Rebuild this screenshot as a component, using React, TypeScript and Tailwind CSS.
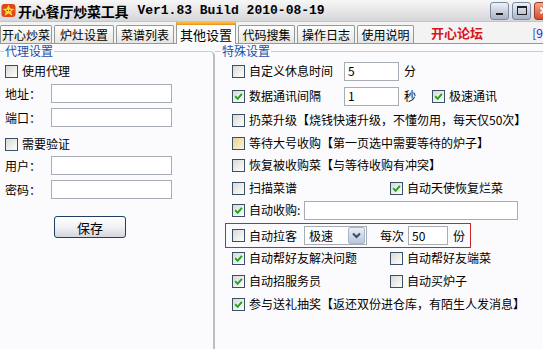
import React from "react";

const Check = ({ checked = false, hot = false }: { checked?: boolean; hot?: boolean }) => (
  <span
    className={`w-[13px] h-[13px] shrink-0 border border-[#3b4f66] flex items-center justify-center ${
      hot ? "bg-linear-to-br from-[#eccf8a] to-[#fdf4de]" : "bg-linear-to-br from-[#d9d9d3] to-white"
    }`}
  >
    {checked && (
      <svg width="9" height="9" viewBox="0 0 9 9">
        <path d="M1.2 4.2 L3.6 6.8 L7.9 1.8" stroke="#21a121" strokeWidth="1.9" fill="none" />
      </svg>
    )}
  </span>
);

const Field = ({ w, value = "" }: { w: string; value?: string }) => (
  <span className={`${w} h-[19px] shrink-0 border border-[#a7adb4] bg-white flex items-center pl-[3px] text-[12px] leading-none`}>
    {value}
  </span>
);

const Tab = ({ label, w, active = false }: { label: string; w: string; active?: boolean }) =>
  active ? (
    <div className={`${w} h-[22px] -mb-px bg-[#fcfcfe] border-x border-[#919b9c] flex flex-col`}>
      <div className="h-[3px] bg-linear-to-b from-[#ffc83c] to-[#e68b2c] -mx-px rounded-t-[2px]" />
      <div className="flex-1 flex items-center justify-center text-[13px] leading-none">{label}</div>
    </div>
  ) : (
    <div className={`${w} h-[18px] bg-linear-to-b from-white to-[#e6e5df] border-x border-t border-[#919b9c] rounded-t-[2px] flex items-center justify-center text-[12px] leading-none`}>
      {label}
    </div>
  );

const WinBtn = ({ children, red = false }: { children: React.ReactNode; red?: boolean }) => (
  <div
    className={`w-[19px] h-[18px] shrink-0 rounded-[3px] border flex items-center justify-center ${
      red
        ? "border-[#9c3b2a] bg-linear-to-b from-[#f2a58c] to-[#d24a2a]"
        : "border-[#7d8aa3] bg-linear-to-b from-[#eef1f7] to-[#a9b3c6]"
    }`}
  >
    {children}
  </div>
);

const Row = ({ children, className = "" }: { children: React.ReactNode; className?: string }) => (
  <div className={`h-[20px] flex items-center ml-[7px] ${className}`}>{children}</div>
);

export default function App() {
  return (
    <div className="w-[543px] h-[349px] overflow-hidden bg-[#fbfbfd] flex flex-col whitespace-nowrap text-black font-['Noto_Sans_CJK_SC',sans-serif] text-[12px]">
      {/* title bar */}
      <div className="h-[22px] shrink-0 flex items-center bg-linear-to-b from-[#f7f7f7] to-[#d7d7d9] border-b border-[#c4c4c6]">
        <svg width="15" height="15" viewBox="0 0 15 15" className="ml-[1px] shrink-0">
          <rect x="0.5" y="1" width="14" height="13" rx="3" fill="#e2461c" />
          <path d="M7.5 1.8 L9.2 5.6 L13.3 5.9 L10.2 8.6 L11.2 12.7 L7.5 10.5 L3.8 12.7 L4.8 8.6 L1.7 5.9 L5.8 5.6 Z" fill="#ffd62e" />
          <circle cx="6.2" cy="7.4" r="0.7" fill="#7a2a00" />
          <circle cx="8.8" cy="7.4" r="0.7" fill="#7a2a00" />
        </svg>
        <span className="ml-[2px] text-[14px] font-bold leading-none tracking-[-0.2px]">开心餐厅炒菜工具</span>
        <span className="ml-[9px] font-['Liberation_Mono',monospace] font-bold text-[13px] leading-none">Ver1.83 Build 2010-08-19</span>
        <div className="ml-auto mr-[-10px] flex gap-[3px]">
          <WinBtn>
            <span className="w-[7px] h-[2px] bg-[#222] mt-[7px]" />
          </WinBtn>
          <WinBtn>
            <span className="w-[10px] h-[9px] border border-[#222] border-t-2" />
          </WinBtn>
          <WinBtn red>
            <svg width="9" height="9" viewBox="0 0 9 9">
              <path d="M1.5 1.5 L7.5 7.5 M7.5 1.5 L1.5 7.5" stroke="white" strokeWidth="1.8" />
            </svg>
          </WinBtn>
        </div>
      </div>

      {/* tabs */}
      <div className="h-[22px] shrink-0 flex items-end gap-[2px] border-b border-[#919b9c] bg-[#f3f3f3]">
        <Tab label="开心炒菜" w="w-[52px]" />
        <Tab label="炉灶设置" w="w-[60px]" />
        <Tab label="菜谱列表" w="w-[58px]" />
        <Tab label="其他设置" w="w-[60px]" active />
        <Tab label="代码搜集" w="w-[57px]" />
        <Tab label="操作日志" w="w-[58px]" />
        <Tab label="使用说明" w="w-[57px]" />
        <span className="self-center ml-[15px] text-[13px] font-bold text-[#d8151b] leading-none">开心论坛</span>
        <span className="self-center ml-auto mr-0 text-[12px] text-[#1a23c8] leading-none">[9</span>
      </div>

      <div className="flex flex-1 min-h-0">
        {/* left group */}
        <fieldset className="w-[215px] shrink-0 border-t border-r-2 border-t-[#cdcdcd] border-r-[#bdbdbd] rounded-tr-[5px]">
          <legend className="ml-[4px] px-[1px] text-[#1e4fa6] leading-[14px] text-[12px]">代理设置</legend>
          <div className="pl-[5px] flex flex-col">
            <div className="mt-[6px] h-[14px] flex items-center gap-[4px]">
              <Check />
              <span className="leading-none">使用代理</span>
            </div>
            <div className="mt-[6px] flex items-center">
              <span className="w-[46px] leading-none">地址：</span>
              <Field w="w-[121px]" />
            </div>
            <div className="mt-[5px] flex items-center">
              <span className="w-[46px] leading-none">端口：</span>
              <Field w="w-[121px]" />
            </div>
            <div className="mt-[10px] h-[14px] flex items-center gap-[4px]">
              <Check />
              <span className="leading-none">需要验证</span>
            </div>
            <div className="mt-[5px] flex items-center">
              <span className="w-[46px] leading-none">用户：</span>
              <Field w="w-[121px]" />
            </div>
            <div className="mt-[5px] flex items-center">
              <span className="w-[46px] leading-none">密码：</span>
              <Field w="w-[121px]" />
            </div>
            <button className="mt-[17px] ml-[49px] w-[72px] h-[22px] rounded-[3px] border border-[#1f3f66] bg-linear-to-b from-white via-[#f1f1f5] to-[#d4d5de] text-[13px] leading-none">
              保存
            </button>
          </div>
        </fieldset>

        {/* right group */}
        <fieldset className="flex-1 border-t border-[#cdcdcd]">
          <legend className="ml-[6px] px-[1px] text-[#1e4fa6] leading-[14px] text-[12px]">特殊设置</legend>
          <div className="pl-[10px] flex flex-col">
            <Row className="mt-[3px]">
              <Check />
              <span className="ml-[4px] w-[95px] leading-none">自定义休息时间</span>
              <Field w="w-[55px]" value="5" />
              <span className="ml-[5px] leading-none">分</span>
            </Row>
            <Row className="mt-[5px]">
              <Check checked />
              <span className="ml-[4px] w-[95px] leading-none">数据通讯间隔</span>
              <Field w="w-[55px]" value="1" />
              <span className="ml-[5px] leading-none">秒</span>
              <span className="ml-[16px]">
                <Check checked />
              </span>
              <span className="ml-[4px] leading-none">极速通讯</span>
            </Row>
            <Row className="mt-[4px]">
              <Check />
              <span className="ml-[4px] leading-none">扔菜升级【烧钱快速升级，不懂勿用，每天仅50次】</span>
            </Row>
            <Row className="mt-[3px]">
              <Check hot />
              <span className="ml-[4px] leading-none">等待大号收购【第一页选中需要等待的炉子】</span>
            </Row>
            <Row className="mt-[2px]">
              <Check />
              <span className="ml-[4px] leading-none">恢复被收购菜【与等待收购有冲突】</span>
            </Row>
            <Row className="mt-[3px]">
              <div className="w-[158px] shrink-0 flex items-center">
                <Check />
                <span className="ml-[4px] leading-none">扫描菜谱</span>
              </div>
              <Check checked />
              <span className="ml-[4px] leading-none">自动天使恢复烂菜</span>
            </Row>
            <Row className="mt-[2px]">
              <Check checked />
              <span className="ml-[4px] w-[55px] shrink-0 leading-none">自动收购:</span>
              <Field w="w-[214px]" />
            </Row>
            <div className="mt-[3px] w-[246px] h-[25px] border border-[#c9262c] flex items-center px-[6px]">
              <Check />
              <span className="ml-[4px] w-[55px] shrink-0 leading-none">自动拉客</span>
              <div className="w-[63px] h-[19px] shrink-0 border border-[#a7adb4] bg-white flex items-center">
                <span className="pl-[4px] flex-1 leading-none">极速</span>
                <span className="w-[17px] h-[17px] mr-px rounded-[2px] border border-[#a9b6cc] bg-linear-to-b from-[#e9eef7] to-[#b9c6dc] flex items-center justify-center">
                  <svg width="9" height="7" viewBox="0 0 9 7">
                    <path d="M1 1.5 L4.5 5 L8 1.5" stroke="#3a4a66" strokeWidth="2" fill="none" />
                  </svg>
                </span>
              </div>
              <span className="ml-[13px] shrink-0 leading-none">每次</span>
              <span className="ml-[4px] shrink-0">
                <Field w="w-[40px]" value="50" />
              </span>
              <span className="ml-[5px] shrink-0 leading-none">份</span>
            </div>
            <Row className="mt-0">
              <div className="w-[158px] shrink-0 flex items-center">
                <Check checked />
                <span className="ml-[4px] leading-none">自动帮好友解决问题</span>
              </div>
              <Check />
              <span className="ml-[4px] leading-none">自动帮好友端菜</span>
            </Row>
            <Row className="mt-[3px]">
              <div className="w-[158px] shrink-0 flex items-center">
                <Check checked />
                <span className="ml-[4px] leading-none">自动招服务员</span>
              </div>
              <Check />
              <span className="ml-[4px] leading-none">自动买炉子</span>
            </Row>
            <Row className="mt-[3px]">
              <Check checked />
              <span className="ml-[4px] leading-none">参与送礼抽奖【返还双份进仓库，有陌生人发消息】</span>
            </Row>
          </div>
        </fieldset>
      </div>
    </div>
  );
}
